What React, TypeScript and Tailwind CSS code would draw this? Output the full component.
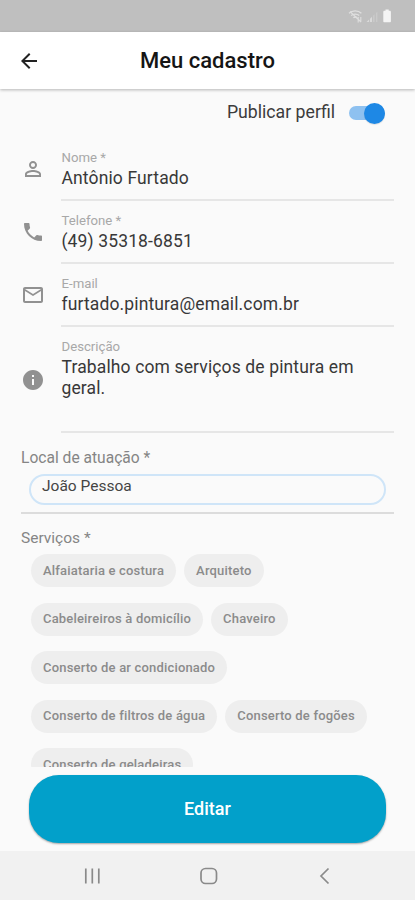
import React from 'react';
import {
    MdArrowBack,
    MdInfo,
    MdMailOutline,
    MdPersonOutline,
    MdPhone,
} from 'react-icons/md';

interface ProfileFieldProps {
    icon: React.ReactNode;
    label: string;
    value: string;
    multiline?: boolean;
}

const SERVICE_ROWS = [
    ['Alfaiataria e costura', 'Arquiteto'],
    ['Cabeleireiros à domicílio', 'Chaveiro'],
    ['Conserto de ar condicionado'],
    ['Conserto de filtros de água', 'Conserto de fogões'],
    ['Conserto de geladeiras'],
];

function StatusBar() {
    return (
        <div className="flex h-8 shrink-0 items-center justify-end bg-[#bfbfbf] pr-[22px]">
            <svg width="46" height="18" viewBox="0 0 46 18" fill="none">
                <path
                    d="M2 6.3C5.4 3 11 3 14.4 6.3M4.2 8.6c2.2-2 5.8-2 8 0M6.4 10.8c1-.9 2.6-.9 3.6 0"
                    stroke="#e0e0e0"
                    strokeWidth="1.3"
                />
                <path d="M3 4.5 14 15M11.2 10v5.5M13.8 10v5" stroke="#dedede" strokeWidth="1.1" />
                <path d="M19.5 15h2.6v-2.6zM23 15V11.8l2-2V15z" fill="#dadada" />
                <path d="M26 15V8.8l1.6-1.6V15zM29 15V6l1.4-1.3V15z" fill="#cacaca" />
                <path
                    d="M38.5 2.5h3.2v1.3h1.1c.6 0 1.1.5 1.1 1.1v9.3c0 .6-.5 1.1-1.1 1.1h-5.4c-.6 0-1.1-.5-1.1-1.1V4.9c0-.6.5-1.1 1.1-1.1h1.1z"
                    fill="#f4f4f4"
                />
            </svg>
        </div>
    );
}

function ProfileField({ icon, label, value, multiline = false }: ProfileFieldProps) {
    return (
        <div className={multiline ? 'flex h-[106px]' : 'flex h-[63px]'}>
            <div
                className={
                    multiline
                        ? 'flex w-10 shrink-0 pt-[41px] text-[#919191]'
                        : 'flex w-10 shrink-0 pt-[19px] text-[#919191]'
                }
            >
                {icon}
            </div>
            <div className="flex flex-1 flex-col border-b-2 border-[#e6e6e6] pt-3 pl-[0.5px]">
                <div className="text-[13.2px] leading-4 text-[#a8a8a8]">{label}</div>
                <div className="mt-[2px] text-[17.5px] leading-[21px] tracking-[0.13px] text-[#383838]">
                    {value}
                </div>
            </div>
        </div>
    );
}

function ServiceChip({ label }: { label: string }) {
    return (
        <div className="flex h-[33px] items-center rounded-full bg-[#eeeeee] px-3 text-[13px] font-medium tracking-[0.18px] whitespace-nowrap text-[#8b8b8b]">
            {label}
        </div>
    );
}

function NavigationBar() {
    return (
        <div className="flex h-[49px] shrink-0 items-center justify-center bg-[#f1f1f1] pt-px">
            <svg width="260" height="24" viewBox="0 0 260 24" fill="none" stroke="#8a8a8a">
                <path d="M7.8 4.5v15M14.3 4.5v15M20.8 4.5v15" strokeWidth="1.7" />
                <rect x="123" y="4.5" width="15.5" height="15" rx="4.5" strokeWidth="1.7" />
                <path d="m250.5 4.5-7.5 7.5 7.5 7.5" strokeWidth="1.7" />
            </svg>
        </div>
    );
}

export default function App() {
    return (
        <div className="flex h-[900px] w-[415px] flex-col overflow-hidden bg-[#fafafa] font-[Roboto,sans-serif]">
            <StatusBar />

            <header className="relative z-10 grid h-[57px] shrink-0 grid-cols-[1fr_auto_1fr] items-center bg-white px-[17px] shadow-[0_1px_3px_rgba(0,0,0,0.28)]">
                <button type="button" aria-label="Voltar" className="w-6 text-[#222222]">
                    <MdArrowBack size={24} />
                </button>
                <h1 className="text-[22px] font-medium text-[#151515]">Meu cadastro</h1>
            </header>

            <main className="flex min-h-0 flex-1 flex-col">
                <div className="flex h-[49px] shrink-0 items-center justify-end pr-[30px] pb-px">
                    <span className="pb-[2px] text-[17.7px] text-[#3c3c3c]">Publicar perfil</span>
                    <button
                        type="button"
                        role="switch"
                        aria-checked="true"
                        aria-label="Publicar perfil"
                        className="ml-[14px] flex h-[14px] w-9 items-center justify-end rounded-full bg-[#8ec1f0]"
                    >
                        <span className="h-[21px] w-[21px] shrink-0 rounded-full bg-[#1e88e5] shadow-[0_1px_1px_rgba(0,0,0,0.1)]" />
                    </button>
                </div>

                <section className="shrink-0 px-[21px]">
                    <ProfileField
                        icon={<MdPersonOutline size={24} />}
                        label="Nome *"
                        value="Antônio Furtado"
                    />
                    <ProfileField
                        icon={<MdPhone size={24} />}
                        label="Telefone *"
                        value="(49) 35318-6851"
                    />
                    <ProfileField
                        icon={<MdMailOutline size={24} />}
                        label="E-mail"
                        value="furtado.pintura@email.com.br"
                    />
                    <ProfileField
                        icon={<MdInfo size={24} />}
                        label="Descrição"
                        value="Trabalho com serviços de pintura em geral."
                        multiline
                    />
                </section>

                <section className="mx-[21px] h-[81px] shrink-0 border-b-2 border-[#dcdcdc] pt-[15px]">
                    <div className="text-[15.6px] leading-5 text-[#858585]">Local de atuação *</div>
                    <div className="mx-2 mt-1.5 h-[31px] rounded-full border-2 border-[#cfe5f8] pl-[11px] text-[15.5px] leading-5 text-[#444444]">
                        João Pessoa
                    </div>
                </section>

                <section className="flex min-h-0 flex-1 flex-col overflow-hidden pt-[14px]">
                    <div className="shrink-0 pl-[21px] text-[15.5px] leading-5 text-[#858585]">
                        Serviços *
                    </div>
                    <div className="mt-1.5 flex flex-col gap-[15.5px] pl-[31px]">
                        {SERVICE_ROWS.map((row) => (
                            <div key={row[0]} className="flex gap-2">
                                {row.map((service) => (
                                    <ServiceChip key={service} label={service} />
                                ))}
                            </div>
                        ))}
                    </div>
                </section>
            </main>

            <div className="shrink-0 px-[29px] pt-2 pb-2">
                <button
                    type="button"
                    className="h-[68px] w-full rounded-[30px] bg-[#02a0ca] pb-[2px] text-[18px] font-medium text-white shadow-[0_1px_2px_rgba(0,0,0,0.35)]"
                >
                    Editar
                </button>
            </div>

            <NavigationBar />
        </div>
    );
}
